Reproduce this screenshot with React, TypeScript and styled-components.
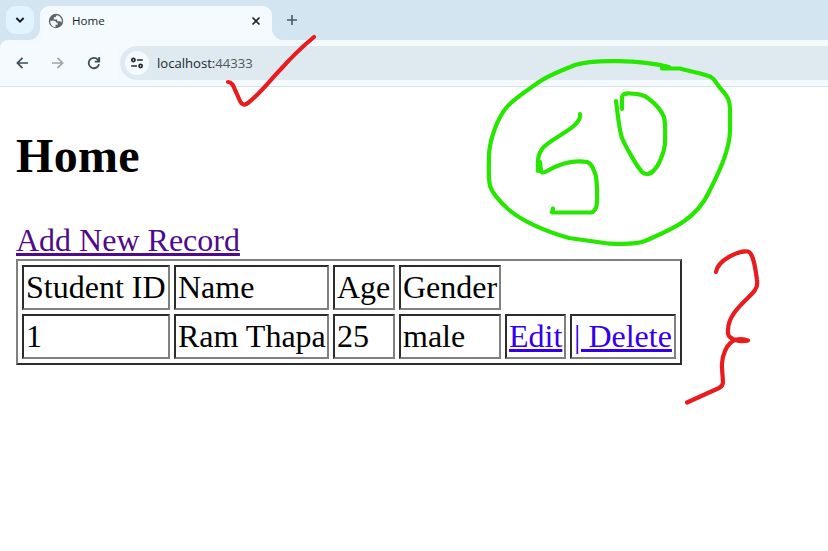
import React from 'react';
import styled, { createGlobalStyle } from 'styled-components';

const GlobalStyle = createGlobalStyle`
  html, body { margin: 0; background: #fff; overflow: hidden; }
`;

const Window = styled.div`
  position: relative;
  width: 828px;
  height: 551px;
  overflow: hidden;
  background: #fff;
`;

const TabStrip = styled.header`
  display: flex;
  align-items: flex-end;
  height: 40px;
  background: #d3e5f1;
  font-family: 'Open Sans', 'Noto Sans', sans-serif;
`;

const TabSearch = styled.button`
  display: flex;
  align-items: center;
  justify-content: center;
  align-self: flex-start;
  width: 28px;
  height: 28px;
  margin: 6px 6px 0;
  padding: 0;
  border: 0;
  border-radius: 9px;
  background: #e1f3ff;
`;

const Tab = styled.div`
  position: relative;
  box-sizing: border-box;
  display: flex;
  align-items: center;
  width: 232px;
  height: 34px;
  padding: 0 10px 5px 8px;
  border-radius: 9px 9px 0 0;
  background: #f5fafe;

  &::before, &::after {
    content: '';
    position: absolute;
    bottom: 0;
    width: 11px;
    height: 11px;
  }
  &::before {
    left: -11px;
    background: radial-gradient(circle at 0 0, transparent 10.5px, #f5fafe 11.5px);
  }
  &::after {
    right: -11px;
    background: radial-gradient(circle at 100% 0, transparent 10.5px, #f5fafe 11.5px);
  }
`;

const TabTitle = styled.span`
  flex: 1;
  margin-left: 8px;
  font-size: 11.6px;
  line-height: 16px;
  color: #202529;
`;

const NewTab = styled.div`
  display: flex;
  height: 40px;
  align-items: center;
  margin-left: 14px;
`;

const Toolbar = styled.nav`
  box-sizing: border-box;
  display: flex;
  align-items: center;
  height: 47px;
  padding-left: 14px;
  border-bottom: 1px solid #d6e1e9;
  border-top-left-radius: 8px;
  background: #f5fafe;
  font-family: 'Open Sans', 'Noto Sans', sans-serif;
`;

const ToolbarBand = styled.div`
  background: #d3e5f1;
`;

const NavIcons = styled.div`
  display: flex;
  gap: 20px;
  width: 106px;
`;

const AddressBar = styled.div`
  box-sizing: border-box;
  flex: 1;
  display: flex;
  align-items: center;
  height: 34px;
  padding-left: 5px;
  border-radius: 17px 0 0 17px;
  background: #dfeaf0;
`;

const SiteInfo = styled.span`
  display: flex;
  align-items: center;
  justify-content: center;
  width: 24px;
  height: 24px;
  border-radius: 50%;
  background: #f5fafe;
`;

const Url = styled.span`
  margin-left: 8px;
  font-size: 13.1px;
  line-height: 20px;
  color: #20272c;
`;

const Port = styled.span`
  color: #50575c;
`;

const Page = styled.main`
  padding: 0 16px;
  font-family: 'Liberation Serif', 'Times New Roman', serif;
  font-size: 32px;
  line-height: 36px;
  color: #000;
`;

const Heading = styled.h1`
  margin: 0;
  padding-top: 41px;
  font-size: 48px;
  line-height: 56px;
  letter-spacing: 0.3px;
`;

const Link = styled.a<{ $visited?: boolean }>`
  color: ${(p) => (p.$visited ? '#500a8c' : '#3300ee')};
  text-decoration-line: underline;
  text-decoration-thickness: 3px;
  text-underline-offset: 2px;
`;

const LinkRow = styled.div`
  height: 37px;
  margin-top: 38px;
`;

const Records = styled.table`
  box-sizing: border-box;
  width: 666px;
  height: 106px;
  table-layout: fixed;
  border: 2px solid;
  border-color: #808080 #2c2c2c #2c2c2c #808080;
  border-collapse: separate;
  border-spacing: 4px;
  font-size: 32px;
`;

const Column = styled.col<{ $width: number }>`
  width: ${(p) => p.$width}px;
`;

const Cell = styled.td`
  box-sizing: border-box;
  height: 45px;
  padding: 2px;
  border: 2px solid;
  border-color: #2c2c2c #808080 #808080 #2c2c2c;
  line-height: 37px;
  white-space: nowrap;
  vertical-align: middle;
`;

const Ink = styled.svg`
  position: absolute;
  inset: 0;
  fill: none;
  stroke-linecap: round;
  stroke-linejoin: round;
  pointer-events: none;
`;

const columns = [148, 155, 62, 102, 61, 106];

const Globe = () => (
  <svg width="16" height="16" viewBox="0 0 16 16">
    <circle cx="8" cy="8" r="7.2" fill="#5f6368" />
    <path
      d="M2.3 7.8h3.6c1.4 0 2.2.7 2.3 2h1.5v2H7.5v2.5C4.3 14.2 2 11.3 2.3 7.8ZM9.2 2.3c-1 .4-1.5 1-1.5 2H5.9v2.3h3.3v1.7h2.3c1 0 1.7.6 2.1 1.5.9-3.2-.9-6.600-4.400-7.500Z"
      fill="#f5fafe"
    />
  </svg>
);

export default function App() {
  return (
    <Window>
      <GlobalStyle />
      <TabStrip>
        <TabSearch aria-label="Search tabs">
          <svg width="10" height="8" viewBox="0 0 10 8" fill="none" stroke="#151b20" strokeWidth="1.9">
            <path d="M1.4 2 5 5.6 8.6 2" />
          </svg>
        </TabSearch>
        <Tab>
          <Globe />
          <TabTitle>Home</TabTitle>
          <svg width="12" height="12" viewBox="0 0 12 12" fill="none" stroke="#1d2328" strokeWidth="1.6">
            <path d="m2.5 2.5 7 7m0-7-7 7" />
          </svg>
        </Tab>
        <NewTab>
          <svg width="12" height="12" viewBox="0 0 12 12" fill="none" stroke="#485961" strokeWidth="1.6">
            <path d="M6 1v10M1 6h10" />
          </svg>
        </NewTab>
      </TabStrip>
      <ToolbarBand>
        <Toolbar>
          <NavIcons>
            <svg width="16" height="16" viewBox="0 0 16 16" fill="none" stroke="#3d4d57" strokeWidth="1.7">
              <path d="M14 8H3.5M8.5 2.900 3.400 8l5.100 5.100" />
            </svg>
            <svg width="16" height="16" viewBox="0 0 16 16" fill="none" stroke="#a0a5a8" strokeWidth="1.7">
              <path d="M2 8h10.5M7.5 2.900 12.600 8l-5.100 5.100" />
            </svg>
            <svg width="16" height="16" viewBox="0 0 16 16" fill="none" stroke="#3d4d57" strokeWidth="1.8">
              <path d="M13 9.1A5.2 5.2 0 1 1 11.8 4.6L13.2 6M13.2 2v4.6H8.8" />
            </svg>
          </NavIcons>
          <AddressBar>
            <SiteInfo>
              <svg width="14" height="14" viewBox="0 0 14 14" fill="none" stroke="#222b31" strokeWidth="1.7">
                <circle cx="3.4" cy="4" r="1.6" />
                <path d="M7 4h5.800M1.200 10h5.800" />
                <circle cx="10.6" cy="10" r="1.6" />
              </svg>
            </SiteInfo>
            <Url>localhost:<Port>44333</Port></Url>
          </AddressBar>
        </Toolbar>
      </ToolbarBand>
      <Page>
        <Heading>Home</Heading>
        <LinkRow>
          <Link $visited>Add New Record</Link>
        </LinkRow>
        <Records>
          <colgroup>
            {columns.map((width, i) => (
              <Column key={i} $width={width} />
            ))}
          </colgroup>
          <tbody>
            <tr>
              <Cell>Student ID</Cell>
              <Cell>Name</Cell>
              <Cell>Age</Cell>
              <Cell>Gender</Cell>
            </tr>
            <tr>
              <Cell>1</Cell>
              <Cell>Ram Thapa</Cell>
              <Cell>25</Cell>
              <Cell>male</Cell>
              <Cell><Link>Edit</Link></Cell>
              <Cell><Link>| Delete</Link></Cell>
            </tr>
          </tbody>
        </Records>
      </Page>
      <Ink width="828" height="551" viewBox="0 0 828 551" strokeWidth="4.2">
        <g stroke="#e81c1e">
          <path d="M228 82C233 82 234 88 236 92L240 101Q243 107 248 103C261 93 271 79 281 69Q296 52 314 37" />
          <path d="M716 272C718 260 739 250 748 251.500C753 253 755 265 757 280Q758 286 755 290C749 299 728 312 728 330C727 337 731 338 735 340Q742 338 748 340.500Q742 342 735 340C727 343 721 356 722 368L723 382Q723 386 719 388L687 402.500" />
        </g>
        <g stroke="#27e600">
          <path d="M662 68.500H680C693 72 705 74 711 77C716 80 717 85 721 89C729 98 730 101 730 112V130C730 151 717 176 709 192C695 222 667 231 645 241C635 245 620 244 608 243.500L569 238C545 231 522 221 508 209C497 199 492 192 490 186C488 176 489 165 489 154C490 138 498 118 506 108C513 99 528 90 539 82C551 74 561 71 575 65C593 59 641 60 669 67" />
          <path d="M580 114C582 128 551 137 542 149C537 156 538 162 538 171L540 162L541 171Q542 174 547 171C561 163 574 160 587 162Q592 164 594 171C598 177 597 193 597 203Q596 212 591 212.500H552L553 208.500" />
          <path d="M622 109V97Q623 93 630 93.500C640 94 645 95 649 99C657 105 661 110 664 117C666 126 665 139 665 144C664 154 658 166 655 169C651 175 645 175 642 172C635 164 624 143 622 138C619 129 618 116 616 101" />
        </g>
      </Ink>
    </Window>
  );
}
